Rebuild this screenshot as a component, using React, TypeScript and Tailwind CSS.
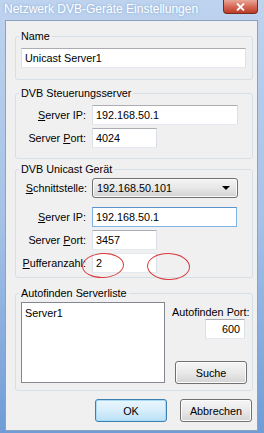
import React from 'react';

type FieldProps = {
  value: string;
  className: string;
  focused?: boolean;
};

function Field({ value, className, focused }: FieldProps) {
  return (
    <div
      className={[
        'h-[20px] bg-white border flex items-center px-[3px] leading-[12px]',
        focused
          ? 'border-[#7eb4ea] border-t-[#5c93cc]'
          : 'border-[#dbdfe6] border-t-[#abadb3] border-b-[#e3e9ef]',
        className,
      ].join(' ')}
    >
      {value}
    </div>
  );
}

function Key({ label, mnemonic, rest }: { label?: string; mnemonic: string; rest: string }) {
  return (
    <>
      {label}
      <span className="underline underline-offset-[1px]">{mnemonic}</span>
      {rest}
    </>
  );
}

type ButtonProps = {
  children: React.ReactNode;
  primary?: boolean;
  className?: string;
};

function Button({ children, primary, className = '' }: ButtonProps) {
  return (
    <div
      className={[
        'h-[23px] w-[72px] rounded-[3px] border flex items-center justify-center leading-[12px]',
        primary
          ? 'border-[#3c7fb1] bg-gradient-to-b from-[#eaf6fd] via-[#d7eefb] to-[#b9e0f7] shadow-[inset_0_0_0_1px_#a7dbf7]'
          : 'border-[#707070] bg-gradient-to-b from-[#f6f6f6] via-[#e9e9e9] to-[#d4d4d4] shadow-[inset_0_0_0_1px_#fcfcfc]',
        className,
      ].join(' ')}
    >
      {children}
    </div>
  );
}

export default function App() {
  return (
    <div className="relative w-[264px] h-[433px] flex flex-col bg-gradient-to-b from-[#bed3ee] via-[#a6c2e7] to-[#6f9cd6] text-[10.8px] text-black font-['Liberation_Sans',Arial,sans-serif]">
      {/* title bar */}
      <div className="h-[20px] flex items-start justify-between">
        <div className="pl-[4px] pt-[1px] text-[12px] leading-[16px] text-white [text-shadow:0_0_3px_#7ea2d0]">
          Netzwerk DVB-Geräte Einstellungen
        </div>
        <div className="mr-[6px] w-[35px] h-[14px] rounded-b-[4px] border border-t-0 border-[#7b2a22] bg-gradient-to-b from-[#e7a797] via-[#d66a56] to-[#b93a26] flex items-center justify-center">
          <svg width="9" height="8" viewBox="0 0 9 8">
            <path d="M1 0.5l7 7M8 0.5l-7 7" stroke="#fff" strokeWidth="1.8" />
          </svg>
        </div>
      </div>

      {/* client area */}
      <div className="flex-1 ml-[5px] mr-[6px] mb-[2px] bg-[#f0f0f0] border border-[#8ba3c1] pl-[9px] pr-[4px] pt-[9px] flex flex-col">
        <fieldset className="h-[50px] border border-[#d5dfe5] rounded-[3px] px-[5px] min-w-0">
          <legend className="-ml-[2px] px-[2px] leading-[12px]">Name</legend>
          <Field value="Unicast Server1" className="mt-[6px] w-[225px] h-[19px]" />
        </fieldset>

        <fieldset className="mt-[7px] h-[72px] border border-[#d5dfe5] rounded-[3px] px-[5px] min-w-0">
          <legend className="-ml-[2px] px-[2px] leading-[12px]">DVB Steuerungsserver</legend>
          <div className="mt-[6px] flex items-center gap-[6px]">
            <span className="w-[65px] text-right whitespace-nowrap">
              <Key mnemonic="S" rest="erver IP:" />
            </span>
            <Field value="192.168.50.1" className="w-[146px]" />
          </div>
          <div className="mt-[3px] flex items-center gap-[6px]">
            <span className="w-[65px] text-right whitespace-nowrap">
              <Key label="Server " mnemonic="P" rest="ort:" />
            </span>
            <Field value="4024" className="w-[65px]" />
          </div>
        </fieldset>

        <fieldset className="mt-[4px] h-[115px] border border-[#d5dfe5] rounded-[3px] px-[5px] min-w-0">
          <legend className="-ml-[2px] px-[2px] leading-[12px]">DVB Unicast Gerät</legend>
          <div className="mt-[3px] flex items-center gap-[5px]">
            <span className="w-[66px] text-right whitespace-nowrap">
              <Key mnemonic="S" rest="chnittstelle:" />
            </span>
            <div className="h-[20px] w-[146px] rounded-[3px] border border-[#707070] bg-gradient-to-b from-[#f4f4f4] via-[#e7e7e7] to-[#d2d2d2] shadow-[inset_0_0_0_1px_#fbfbfb] flex items-center justify-between pl-[4px] pr-[7px]">
              <span className="leading-[12px]">192.168.50.101</span>
              <svg width="8" height="4" viewBox="0 0 8 4">
                <path d="M0 0h8L4 4z" fill="#000" />
              </svg>
            </div>
          </div>
          <div className="mt-[9px] flex items-center gap-[6px]">
            <span className="w-[65px] text-right whitespace-nowrap">
              <Key mnemonic="S" rest="erver IP:" />
            </span>
            <Field value="192.168.50.1" className="w-[145px]" focused />
          </div>
          <div className="mt-[3px] flex items-center gap-[6px]">
            <span className="w-[65px] text-right whitespace-nowrap">
              <Key label="Server " mnemonic="P" rest="ort:" />
            </span>
            <Field value="3457" className="w-[65px]" />
          </div>
          <div className="mt-[3px] flex items-center gap-[6px]">
            <span className="w-[65px] text-right whitespace-nowrap">
              <Key mnemonic="P" rest="ufferanzahl:" />
            </span>
            <Field value="2" className="w-[65px] border-t-[#e3e9ef]" />
          </div>
        </fieldset>

        <fieldset className="mt-[9px] h-[104px] border border-[#d5dfe5] rounded-[3px] pl-[5px] pr-[2px] min-w-0">
          <legend className="-ml-[2px] px-[2px] leading-[12px]">Autofinden Serverliste</legend>
          <div className="mt-[3px] flex">
            <div className="w-[144px] h-[81px] bg-white border border-[#828790] px-[3px] pt-[4px] leading-[12px]">
              Server1
            </div>
            <div className="ml-[7px] flex flex-col">
              <span className="mt-[4px] leading-[12px] whitespace-nowrap">Autofinden Port:</span>
              <Field value="600" className="mt-[1px] ml-[33px] w-[40px] h-[19px] justify-end pr-[4px]" />
              <Button className="mt-[22px] ml-[3px]">Suche</Button>
            </div>
          </div>
        </fieldset>

        <div className="mt-[8px] mr-[1px] flex justify-end gap-[13px]">
          <Button primary>OK</Button>
          <Button>Abbrechen</Button>
        </div>
      </div>

      {/* red annotation circles */}
      <div className="absolute left-[82px] top-[253px] w-[42px] h-[25px] rounded-[50%] border border-[#d8393c] -rotate-3" />
      <div className="absolute left-[147px] top-[253px] w-[43px] h-[27px] rounded-[50%] border border-[#d8393c] rotate-2" />
    </div>
  );
}
